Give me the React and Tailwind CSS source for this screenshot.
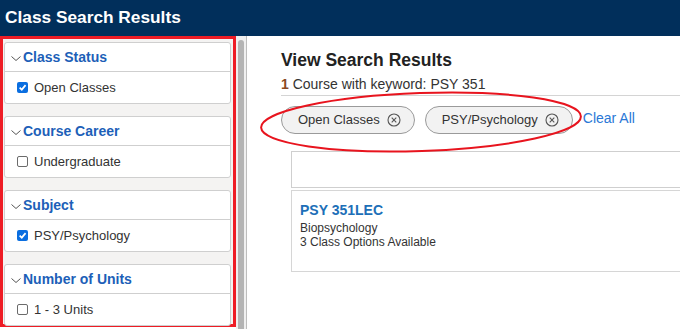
import React from 'react';

const filters = [
  { title: 'Class Status', label: 'Open Classes', checked: true },
  { title: 'Course Career', label: 'Undergraduate', checked: false },
  { title: 'Subject', label: 'PSY/Psychology', checked: true },
  { title: 'Number of Units', label: '1 - 3 Units', checked: false },
];

const Chevron = () => (
  <svg width="12" height="10" viewBox="0 0 12 10" className="mr-[1px] mt-[2px]">
    <path d="M1.5 3.5 L6 7.5 L10.5 3.5" fill="none" stroke="#555" strokeWidth="1" />
  </svg>
);

const CheckBox = ({ checked }) =>
  checked ? (
    <span className="w-[11px] h-[11px] rounded-[2px] bg-[#0a6ee0] flex items-center justify-center">
      <svg width="9" height="9" viewBox="0 0 10 10">
        <path d="M1.8 5.2 L4.2 7.4 L8.4 2.4" fill="none" stroke="#fff" strokeWidth="1.9" />
      </svg>
    </span>
  ) : (
    <span className="w-[11px] h-[11px] rounded-[2px] border border-[#6b6b6b] bg-white" />
  );

const FilterCard = ({ title, label, checked }) => (
  <div className="bg-white border border-[#cfcfcf] rounded-[3px]">
    <div className="h-[29px] flex items-center pl-[5px] border-b border-[#cfcfcf]">
      <Chevron />
      <span className="text-[14px] font-bold text-[#1d5fb8]">{title}</span>
    </div>
    <div className="h-[31px] flex items-center pl-[12px] gap-[6px]">
      <CheckBox checked={checked} />
      <span className="text-[13px] text-[#333]">{label}</span>
    </div>
  </div>
);

const CloseCircle = () => (
  <svg width="14" height="14" viewBox="0 0 14 14">
    <circle cx="7" cy="7" r="6" fill="none" stroke="#555" strokeWidth="1.1" />
    <path d="M4.7 4.7 L9.3 9.3 M9.3 4.7 L4.7 9.3" stroke="#555" strokeWidth="1.1" />
  </svg>
);

const Chip = ({ text }) => (
  <div className="h-[28px] flex items-center gap-[7px] pl-[16px] pr-[13px] rounded-full border border-[#9a9a9a] bg-[#f2f2f2] text-[13px] text-[#333]">
    {text}
    <CloseCircle />
  </div>
);

export default function App() {
  return (
    <div className="w-[680px] h-[329px] bg-white overflow-hidden relative font-['Liberation_Sans',Arial,sans-serif]">
      <div className="h-[36px] bg-[#012f5b] flex items-center pl-[5px]">
        <h1 className="text-white font-bold text-[17.3px]">Class Search Results</h1>
      </div>
      <div className="flex h-[293px]">
        <div className="w-[236px] h-[291px] border-[3px] border-[#ee1c25] bg-[#f4f3f2] pl-[1px] pr-[2px] pt-[3px] flex flex-col gap-[12px]">
          {filters.map((f) => (
            <FilterCard key={f.title} {...f} />
          ))}
        </div>
        <div className="w-[10px] bg-[#f0f0f0] flex justify-center pt-[4px]">
          <div className="w-[6px] h-[289px] rounded-t-[3px] bg-[#b4b4b4]" />
        </div>
        <div className="flex-1 border-l border-[#bdbdbd] pl-[34px] pt-[12px]">
          <h2 className="text-[17.5px] font-bold text-[#222] leading-[24px]">View Search Results</h2>
          <div className="mt-[4px] text-[14px] text-[#333] pb-[2px] border-b border-[#d4d4d4] leading-[17px]">
            <span className="text-[#8a4a23] font-bold">1</span> Course with keyword: PSY 351
          </div>
          <div className="flex items-center mt-[10px] gap-[10px]">
            <Chip text="Open Classes" />
            <Chip text="PSY/Psychology" />
            <a className="text-[14px] text-[#2a78d6] -mt-[3px]">Clear All</a>
          </div>
          <div className="ml-[10px] mt-[17px]">
            <div className="h-[37px] border border-[#cfcfcf] border-r-0" />
            <div className="mt-[2px] h-[82px] border border-[#d6d6d6] border-r-0 pl-[8px] pt-[10px]">
              <div className="text-[14px] font-bold text-[#1d6fb8] leading-[18px]">PSY 351LEC</div>
              <div className="text-[12px] text-[#333] leading-[14px] mt-[2px]">Biopsychology</div>
              <div className="text-[12px] text-[#333] leading-[14px]">3 Class Options Available</div>
            </div>
          </div>
        </div>
      </div>
      <svg className="absolute left-0 top-0 pointer-events-none" width="680" height="329">
        <ellipse cx="421" cy="122" rx="160" ry="29" transform="rotate(-2 421 122)" fill="none" stroke="#e8141e" strokeWidth="2" />
      </svg>
    </div>
  );
}
